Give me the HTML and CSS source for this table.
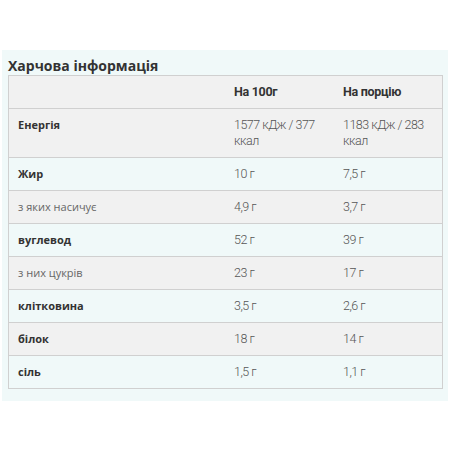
FILE: index.html
```html
<!DOCTYPE html>
<html lang="uk">
  <head>
    <meta charset="UTF-8" />
    <meta name="viewport" content="width=device-width, initial-scale=1.0" />
    <title>Харчова інформація</title>

    <link rel="stylesheet" href="styles.css">
  </head>
  <body>
    <div class="panel">
      <h3 class="title">Харчова інформація</h3>
      <table class="nutrition">
        <thead>
          <tr>
            <th class="label"></th>
            <th>На 100г</th>
            <th>На порцію</th>
          </tr>
        </thead>
        <tbody>
          <tr>
            <td class="label bold">Енергія</td>
            <td>1577 кДж / 377 ккал</td>
            <td>1183 кДж / 283 ккал</td>
          </tr>
          <tr>
            <td class="label bold">Жир</td>
            <td>10 г</td>
            <td>7,5 г</td>
          </tr>
          <tr>
            <td class="label">з яких насичує</td>
            <td>4,9 г</td>
            <td>3,7 г</td>
          </tr>
          <tr>
            <td class="label bold">вуглевод</td>
            <td>52 г</td>
            <td>39 г</td>
          </tr>
          <tr>
            <td class="label">з них цукрів</td>
            <td>23 г</td>
            <td>17 г</td>
          </tr>
          <tr>
            <td class="label bold">клітковина</td>
            <td>3,5 г</td>
            <td>2,6 г</td>
          </tr>
          <tr>
            <td class="label bold">білок</td>
            <td>18 г</td>
            <td>14 г</td>
          </tr>
          <tr>
            <td class="label bold">сіль</td>
            <td>1,5 г</td>
            <td>1,1 г</td>
          </tr>
        </tbody>
      </table>
    </div>
  </body>
</html>
```

FILE: styles.css
```css
body {
  margin: 0;
  padding: 50px 2px 0;
  background: #ffffff;
  font-family: "Open Sans", "Liberation Sans", sans-serif;
  color: #333;
}

.panel {
  background-color: #f0f9f9;
  padding: 0 5px 12px 6px;
}

.title {
  margin: 0;
  padding-top: 6px;
  font-size: 14px;
  line-height: 19px;
  font-weight: 700;
  color: #333;
}

.nutrition {
  width: 100%;
  border-collapse: collapse;
  border: 1px solid #d0d0d0;
  font-family: Roboto, "Liberation Sans", sans-serif;
  font-size: 12.5px;
  font-weight: 300;
  letter-spacing: -0.5px;
  color: #555;
}

.nutrition th,
.nutrition td {
  text-align: left;
  vertical-align: top;
  line-height: 16px;
  padding: 8px 9px;
  border-top: 1px solid #d0d0d0;
}

.nutrition th {
  font-weight: 700;
  letter-spacing: -0.3px;
  color: #333;
}

.nutrition thead tr {
  background-color: #f1f1f1;
}

.nutrition tbody tr:nth-child(odd) {
  background-color: #f1f1f1;
}

.nutrition .label {
  width: 198px;
  font-family: "Open Sans", "Liberation Sans", sans-serif;
  font-size: 11px;
  font-weight: 400;
  letter-spacing: 0;
  color: #666;
}

.nutrition .label.bold {
  font-weight: 700;
  color: #333;
}

.nutrition td:nth-child(2) {
  width: 91px;
}
```
